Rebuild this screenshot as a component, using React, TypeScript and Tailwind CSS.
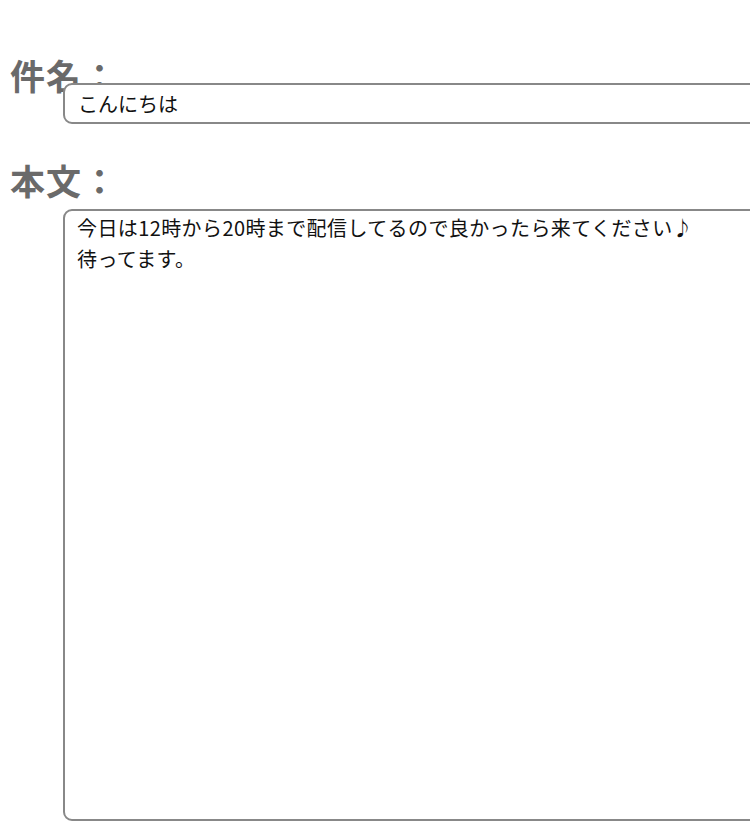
import React from 'react';

const App: React.FC = () => {
  const labelCls =
    "block pl-[10px] text-[35px] leading-[40px] font-semibold tracking-[1px] text-[#6a6a6a] font-['Liberation_Serif','Noto_Sans_CJK_JP',serif]";
  const fieldCls =
    "block ml-[63px] w-[720px] border-2 border-[#888] rounded-[9px] bg-white text-[#111] text-[20px] font-['Noto_Sans_CJK_JP',sans-serif] outline-none";

  return (
    <div className="w-[750px] h-[826px] overflow-hidden bg-white pt-[59px]">
      <label className={labelCls}>件名：</label>
      <input
        className={`${fieldCls} relative -mt-[16px] h-[41px] px-[13px]`}
        defaultValue="こんにちは"
      />
      <label className={`${labelCls} mt-[40px]`}>本文：</label>
      <textarea
        className={`${fieldCls} mt-[5px] h-[612px] px-[12px] py-[1px] leading-[31px] tracking-[0.4px] resize-none`}
        defaultValue={'今日は12時から20時まで配信してるので良かったら来てください♪\n待ってます。'}
      />
    </div>
  );
};

export default App;
